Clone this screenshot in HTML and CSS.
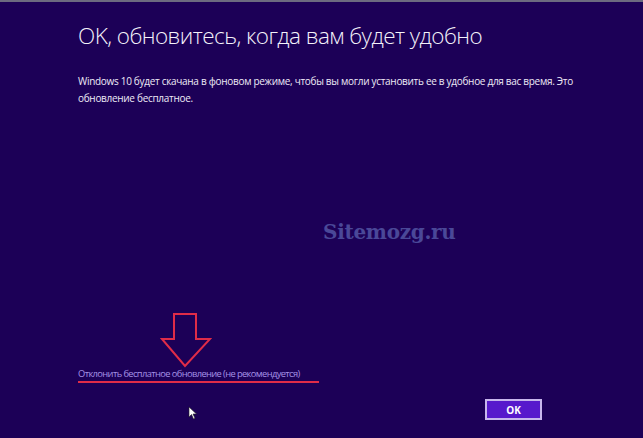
FILE: index.html
```html
<!DOCTYPE html>
<html lang="ru">
<head>
    <meta charset="UTF-8">
    <title>Обновление до Windows 10</title>
    <link rel="stylesheet" href="styles.css">
</head>
<body>
    <div class="screen">
        <div class="content">
            <h1>OK, обновитесь, когда вам будет удобно</h1>
            <p class="info">Windows 10 будет скачана в фоновом режиме, чтобы вы могли установить ее в удобное для вас время. Это обновление бесплатное.</p>

            <div class="mark">Sitemozg.ru</div>

            <div class="decline">
                <svg class="arrow" width="52" height="56" viewBox="0 0 52 56">
                    <path d="M14 1 H36 V26 H50 L25 53 L2 26 H14 Z" fill="none" stroke="#e02c48" stroke-width="2"/>
                </svg>
                <a class="decline-link" href="#">Отклонить бесплатное обновление (не рекомендуется)</a>
            </div>

            <div class="footer">
                <svg class="cursor" width="10" height="14" viewBox="0 0 10 14">
                    <path d="M1 1 V11 L3.5 8.5 L5.5 13 L7 12.3 L5 8 H8.5 Z" fill="#fff" stroke="#222" stroke-width="0.6"/>
                </svg>
                <button class="ok-btn">OK</button>
            </div>
        </div>
    </div>
</body>
</html>
```

FILE: styles.css
```css
* {
    box-sizing: border-box;
    margin: 0;
    padding: 0;
}

body {
    background: #1c0057;
    font-family: 'Open Sans', 'Liberation Sans', sans-serif;
    color: #fff;
}

.screen {
    height: 438px;
    border-top: 2px solid #6c6a80;
    overflow: hidden;
}

.content {
    padding: 19px 0 0 78px;
    width: 565px;
}

h1 {
    font-weight: 300;
    font-size: 22.5px;
    letter-spacing: -0.55px;
    line-height: 30px;
    color: #f4f2fa;
}

.info {
    margin-top: 22px;
    font-size: 10px;
    line-height: 17px;
    letter-spacing: -0.3px;
    color: #eeeaf6;
    width: 500px;
}

.mark {
    margin: 113px 0 0 245px;
    font-family: 'DejaVu Serif', 'Liberation Serif', serif;
    font-weight: bold;
    font-size: 20px;
    letter-spacing: -0.3px;
    color: #4a4898;
}

.decline {
    margin-top: 69px;
    display: flex;
    flex-direction: column;
    align-items: flex-start;
}

.arrow {
    margin-left: 82px;
    display: block;
}

.decline-link {
    margin-top: -2px;
    font-size: 9.3px;
    letter-spacing: -0.6px;
    color: #a592e6;
    text-decoration: none;
    border-bottom: 2px solid #e02c48;
    padding-bottom: 1px;
    width: 241px;
    white-space: nowrap;
}

.footer {
    margin-top: 16px;
    display: flex;
    align-items: flex-start;
}

.cursor {
    margin: 7px 0 0 110px;
}

.ok-btn {
    margin-left: 287px;
    width: 57px;
    height: 21px;
    background: #5719cc;
    border: 2px solid #c7b6ec;
    color: #fff;
    font-family: 'Open Sans', 'Liberation Sans', sans-serif;
    font-weight: bold;
    font-size: 10px;
}
```
